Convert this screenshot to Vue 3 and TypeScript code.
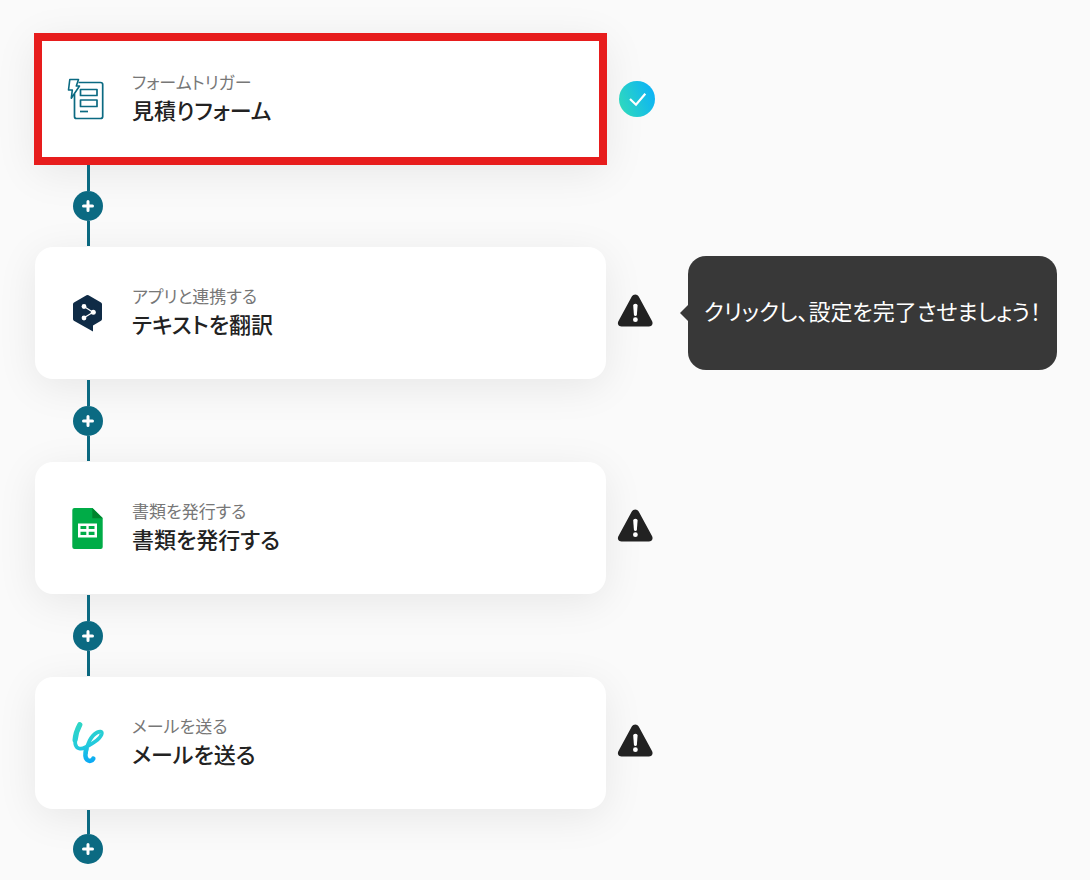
<script setup lang="ts">
type Icon = 'form' | 'deepl' | 'sheets' | 'mail'

interface Step {
  id: number
  icon: Icon
  label: string
  title: string
  done: boolean
  selected: boolean
  hint?: string
}

const steps: Step[] = [
  { id: 1, icon: 'form', label: 'フォームトリガー', title: '見積りフォーム', done: true, selected: true },
  { id: 2, icon: 'deepl', label: 'アプリと連携する', title: 'テキストを翻訳', done: false, selected: false, hint: 'クリックし、設定を完了させましょう！' },
  { id: 3, icon: 'sheets', label: '書類を発行する', title: '書類を発行する', done: false, selected: false },
  { id: 4, icon: 'mail', label: 'メールを送る', title: 'メールを送る', done: false, selected: false },
]
</script>

<template>
  <main class="flow">
    <ol class="steps">
      <li v-for="step in steps" :key="step.id" class="step">
        <div class="row">
          <button type="button" class="card" :class="{ selected: step.selected }">
            <svg v-if="step.icon === 'form'" class="icon" viewBox="0 -1 60 60" aria-hidden="true">
              <g fill="none" stroke="#0b6a82" stroke-width="1.7" stroke-linejoin="round">
                <path d="M18.500 12.500H40.500Q42.700 12.500 42.700 14.500V46.500Q42.700 48.500 40.500 48.500H16.500Q14.500 48.500 14.500 46.500V24" />
                <path d="M9.800 9.500H18.500L16.300 16H19.500L11.300 28.200L12.300 20H8.500Z" fill="#fff" stroke-width="1.600" />
                <path d="M20.500 19.500H37V25.500H20.500ZM20.500 30H37V36.500H20.500Z" />
                <path d="M20 41.500H28" />
              </g>
            </svg>
            <svg v-else-if="step.icon === 'deepl'" class="icon" viewBox="0 -2 60 60" aria-hidden="true">
              <path d="M26.500 10.300Q27.500 9.700 28.500 10.300L41 17.500Q42 18.100 42 19.200V34Q42 35.200 41 35.800L33 40.400V46.500L13.900 35.800Q13 35.200 13 34V19.200Q13 18.100 14 17.500Z" fill="#0f2b46" />
              <path d="M24 21.500L33 27.300L24 32.800" fill="none" stroke="#fff" stroke-width="1.200" />
              <g fill="#fff"><circle cx="24" cy="21.500" r="2.400" /><circle cx="33.300" cy="27.300" r="2.500" /><circle cx="24" cy="33" r="2.400" /></g>
            </svg>
            <svg v-else-if="step.icon === 'sheets'" class="icon" viewBox="0 -2 60 60" aria-hidden="true">
              <path d="M14.500 8H32.500L42.700 18V47Q42.700 49 40.700 49H14.500Q12.300 49 12.300 47V10Q12.300 8 14.500 8Z" fill="#00ac47" />
              <path d="M32.300 8L42.700 18.200H32.300Z" fill="#00832d" />
              <path fill-rule="evenodd" d="M18 23.500H37V37.500H18ZM20.500 26V29H26.300V26ZM28.700 26V29H34.500V26ZM20.500 31.700V35H26.300V31.700ZM28.700 31.700V35H34.500V31.700Z" fill="#fff" />
            </svg>
            <svg v-else class="icon" viewBox="0 3 60 60" aria-hidden="true">
              <defs>
                <linearGradient id="mail-gradient" gradientUnits="userSpaceOnUse" x1="22" y1="12" x2="32" y2="52">
                  <stop offset="0" stop-color="#2fd6c4" />
                  <stop offset=".55" stop-color="#24cbdc" />
                  <stop offset="1" stop-color="#0aa9f5" />
                </linearGradient>
              </defs>
              <g fill="none" stroke="url(#mail-gradient)" stroke-linecap="round" stroke-linejoin="round">
                <path d="M20 14.500C16.500 20.500 14.300 29 15.300 34C16.300 39.300 21.500 39.500 25 37.500C31 34.500 41 28.500 41.800 23.500C42 21.300 39.800 21 37 22.500C31.500 25.500 26.300 34.500 26 43" stroke-width="3.800" />
                <path d="M19.800 14.800C17.500 19 15.500 25 15.100 30" stroke-width="5.200" />
                <path d="M26.300 38.500C25.400 42 24.800 47.500 27 49.700C29 51.600 32.300 51 33.300 48.700" stroke-width="4.600" />
              </g>
            </svg>
            <span class="text">
              <span class="label">{{ step.label }}</span>
              <span class="title">{{ step.title }}</span>
            </span>
          </button>

          <svg v-if="step.done" class="status" viewBox="-1 0 36 36" role="img" aria-label="完了">
            <defs>
              <linearGradient id="done-gradient" x1="0" y1=".7" x2="1" y2=".3">
                <stop offset="0" stop-color="#2fd9bd" />
                <stop offset="1" stop-color="#0cb2f7" />
              </linearGradient>
            </defs>
            <circle cx="18" cy="18" r="18" fill="url(#done-gradient)" />
            <path d="M11 18L17 23.700L26.300 12.700" fill="none" stroke="#fff" stroke-width="2.200" />
          </svg>
          <svg v-else class="status" viewBox="0 0 36 36" role="img" aria-label="未設定">
            <path d="M13.800 1.500C15.300-1.200 19.200-1.200 20.700 1.500L34 26C35.400 28.700 34 31.500 31 31.500H3.500C.5 31.500-1 28.700 .5 26Z" fill="#222" />
            <path d="M15.200 10.500Q15.200 8.700 17.400 8.700T19.600 10.500L18.900 19.500Q18.700 21 17.400 21T15.900 19.500Z" fill="#fff" />
            <circle cx="17.400" cy="24.700" r="2.400" fill="#fff" />
          </svg>

          <div v-if="step.hint" class="hint" role="tooltip">{{ step.hint }}</div>
        </div>

        <div class="connector" :class="{ last: step.id === steps.length }">
          <button type="button" class="add" aria-label="ステップを追加">
            <svg viewBox="0 0 30 30" aria-hidden="true">
              <path d="M15 10.500V19.500M10.500 15H19.500" stroke="#fff" stroke-width="3" stroke-linecap="round" />
            </svg>
          </button>
        </div>
      </li>
    </ol>
  </main>
</template>

<style>
body {
  margin: 0;
  background: #fafafa;
}
</style>

<style scoped>
.flow {
  padding: 34px 32px 16px 35px;
  font-family: "Noto Sans CJK JP", sans-serif;
  font-feature-settings: "palt";
}
.steps {
  margin: 0;
  padding: 0;
  list-style: none;
}
.row {
  display: grid;
  grid-template-columns: minmax(0, 571px) 36px minmax(0, 369px);
  column-gap: 12px;
  align-items: center;
}
.card {
  display: flex;
  align-items: center;
  gap: 12px;
  min-height: 132px;
  padding: 0 25px;
  border: 0;
  border-radius: 18px;
  background: #fff;
  box-shadow: 0 8px 40px rgba(0, 0, 0, 0.08);
  font: inherit;
  font-feature-settings: inherit;
  text-align: left;
  cursor: pointer;
}
.card.selected {
  min-height: 130px;
  outline: 8px solid #e71d1d;
  outline-offset: -7px;
  border-radius: 0;
}
.icon {
  flex: none;
  width: 60px;
  height: 60px;
}
.text {
  display: flex;
  flex-direction: column;
  padding-bottom: 4px;
}
.label {
  font-size: 17px;
  line-height: 24px;
  color: #777;
}
.title {
  font-size: 22px;
  font-weight: 500;
  line-height: 30px;
  color: #222;
}
.status {
  width: 36px;
  height: 36px;
  overflow: visible;
}
.hint {
  position: relative;
  display: grid;
  place-items: center;
  box-sizing: border-box;
  min-height: 114px;
  margin-left: 22px;
  margin-right: -22px;
  padding-bottom: 6px;
  border-radius: 18px;
  background: #383838;
  color: #fff;
  font-size: 22px;
  line-height: 32px;
}
.hint::before {
  content: "";
  position: absolute;
  top: 50%;
  left: -8px;
  border: 8px solid transparent;
  border-left: 0;
  border-right-color: #383838;
  transform: translateY(-50%);
}
.connector {
  display: flex;
  flex-direction: column;
  align-items: center;
  width: 30px;
  height: 83px;
  margin-left: 38px;
}
.connector::before,
.connector::after {
  content: "";
  flex: 1;
  width: 3px;
  margin: 1px 0 0 1px;
  background: #0b6a82;
}
.connector::after {
  margin: 0 0 1px 1px;
}
.connector.last {
  height: 55px;
}
.connector.last::after {
  display: none;
}
.add {
  flex: none;
  width: 30px;
  height: 30px;
  padding: 0;
  border: 0;
  border-radius: 50%;
  background: #0b6a82;
  cursor: pointer;
}
.add svg {
  display: block;
  width: 30px;
  height: 30px;
}
</style>
